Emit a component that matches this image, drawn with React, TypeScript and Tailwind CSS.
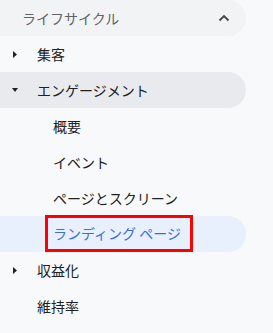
const font = { fontFamily: '"Noto Sans CJK JP", "Noto Sans", sans-serif' };

function Caret({ open }: { open?: boolean }) {
  return (
    <span className="w-[37px] flex justify-start pl-[12px]">
      {open ? (
        <svg width="6" height="4" viewBox="0 0 6 4">
          <path d="M0 0 L6 0 L3 4 Z" fill="#202124" />
        </svg>
      ) : (
        <svg width="4" height="7" viewBox="0 0 4 7" className="ml-[1px]">
          <path d="M0 0 L4 3.5 L0 7 Z" fill="#202124" />
        </svg>
      )}
    </span>
  );
}

function Row({
  children,
  bg = "",
  indent = "pl-[37px]",
}: {
  children: React.ReactNode;
  bg?: string;
  indent?: string;
}) {
  return (
    <div className={`h-[36px] w-[246px] flex items-center rounded-r-full ${bg} ${indent}`}>
      {children}
    </div>
  );
}

export default function App() {
  return (
    <div className="w-[273px] h-[333px] bg-[#f8f9fa] text-[14px] text-[#202124] overflow-hidden" style={font}>
      <div className="h-[36px] w-[246px] flex items-center justify-between rounded-r-full bg-[#f1f3f4] pl-[22px] pr-[16px]">
        <span className="text-[#5f6368]">ライフサイクル</span>
        <svg width="12" height="8" viewBox="0 0 12 8">
          <path d="M1.5 6.5 L6 2 L10.5 6.5" fill="none" stroke="#444746" strokeWidth="1.8" />
        </svg>
      </div>
      <Row indent="">
        <Caret />
        <span>集客</span>
      </Row>
      <Row indent="" bg="bg-[#e8eaed]">
        <Caret open />
        <span>エンゲージメント</span>
      </Row>
      <Row indent="pl-[53px]">概要</Row>
      <Row indent="pl-[53px]">イベント</Row>
      <Row indent="pl-[53px]">ページとスクリーン</Row>
      <Row indent="pl-[53px]" bg="bg-[#e8f0fe]">
        <span className="-ml-[8px] h-[37px] -mt-[1px] flex items-center border-[3px] border-[#ff0000] pl-[5px] pr-[9px] text-[#3b6fd4]">
          ランディング ページ
        </span>
      </Row>
      <Row indent="">
        <Caret />
        <span>収益化</span>
      </Row>
      <Row>維持率</Row>
    </div>
  );
}
